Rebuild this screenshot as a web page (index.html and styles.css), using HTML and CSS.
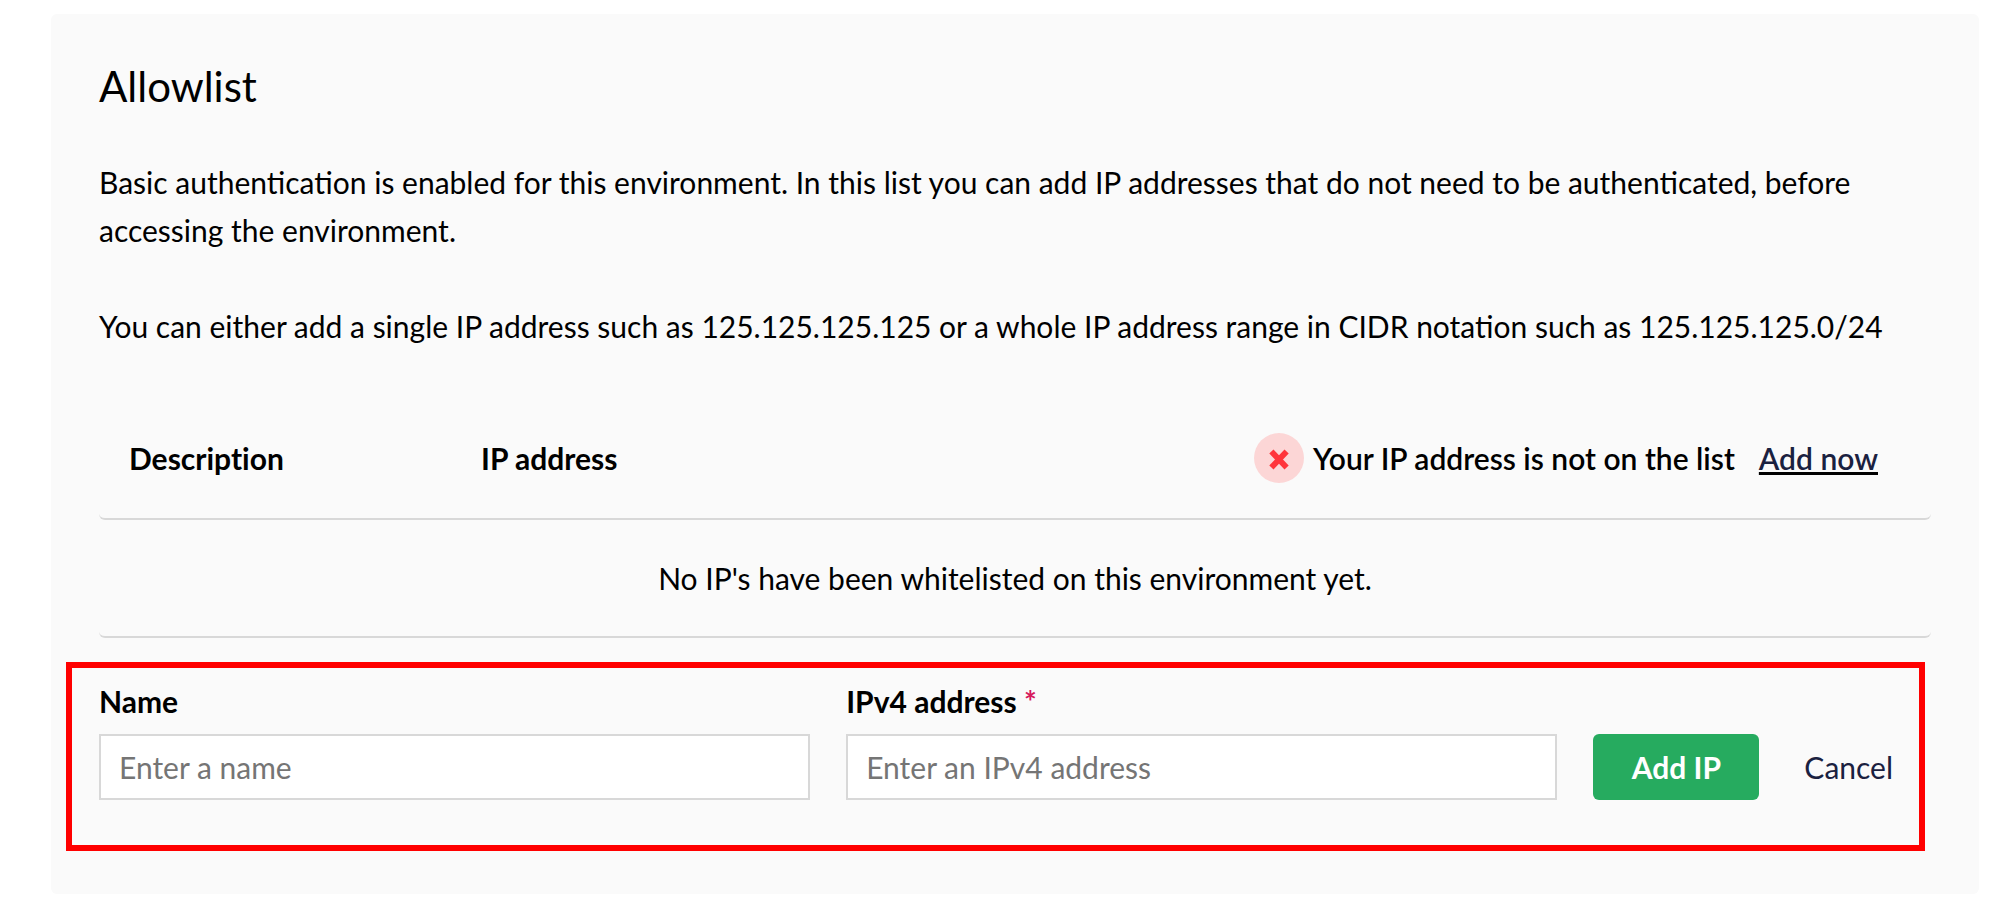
FILE: index.html
```html
<!DOCTYPE html>
<html lang="en">
<head>
<meta charset="utf-8">
<title>Allowlist</title>
<link rel="stylesheet" href="styles.css">
</head>
<body>
<main class="card">
  <h1 class="title">Allowlist</h1>
  <p class="text">Basic authentication is enabled for this environment. In this list you can add IP addresses that do not need to be authenticated, before accessing the environment.</p>
  <p class="text">You can either add a single IP address such as 125.125.125.125 or a whole IP address range in CIDR notation such as 125.125.125.0/24</p>
  <table class="list">
    <thead>
      <tr>
        <th class="col-desc">Description</th>
        <th class="col-ip">IP address</th>
        <th class="col-status">
          <div class="status">
            <svg class="status-icon" viewBox="0 0 50 50" aria-hidden="true"><circle cx="25" cy="25" r="25" fill="#fcd6d6"/><path d="M17.4 18.4L32.6 34.4M32.6 18.4L17.4 34.4" stroke="#ff353b" stroke-width="5.8"/></svg>
            <span>Your IP address is not on the list</span>
            <a class="add-now" href="#">Add now</a>
          </div>
        </th>
      </tr>
    </thead>
    <tbody>
      <tr><td class="empty" colspan="3">No IP's have been whitelisted on this environment yet.</td></tr>
    </tbody>
  </table>
  <form class="form">
    <div class="field">
      <label class="label" for="name">Name</label>
      <input class="input" id="name" type="text" placeholder="Enter a name">
    </div>
    <div class="field">
      <label class="label" for="ip">IPv4 address <span class="required">*</span></label>
      <input class="input" id="ip" type="text" placeholder="Enter an IPv4 address">
    </div>
    <button class="submit" type="submit">Add IP</button>
    <button class="cancel" type="button">Cancel</button>
  </form>
</main>
</body>
</html>
```
FILE: styles.css
```css
* { box-sizing: border-box; }
body {
  margin: 0;
  padding: 14px 37px 16px 51px;
  background: #fff;
  color: #000;
  font: 30px/48px Lato, sans-serif;
}
.card {
  padding: 48px 48px 43px;
  border-radius: 6px;
  background: #fafafa;
}
.title { margin: 0 0 48px; font-size: 42px; line-height: 48px; font-weight: 400; }
.text { margin: 0 0 48px; }
.list { width: 100%; border-collapse: separate; border-spacing: 0; table-layout: fixed; }
.list th, .list td { padding: 0 30px; border-bottom: 2px solid #d8d8d8; text-align: left; }
.list th { height: 122px; font-weight: 700; font-variant-ligatures: none; }
.list td { height: 118px; }
.list th:first-child { border-bottom-left-radius: 6px; }
.list th:last-child { border-bottom-right-radius: 6px; }
.list .empty { border-radius: 0 0 6px 6px; text-align: center; }
.col-desc { width: 352px; }
.col-ip { width: 352px; }
.list .col-status { padding-right: 53px; }
.status {
  display: flex;
  align-items: center;
  justify-content: flex-end;
  font-weight: 600;
  white-space: nowrap;
}
.status-icon { width: 50px; height: 50px; margin-right: 9px; }
.add-now {
  margin-left: 24px;
  color: #1a2140;
  text-decoration: underline 3px #000;
  text-underline-offset: 2px;
}
.form {
  display: flex;
  align-items: flex-end;
  gap: 36px;
  margin: 24px 6px 0 -33px;
  padding: 9px 26px 45px 27px;
  border: 6px solid #ff0000;
}
.field { flex: 1; }
.label { display: block; margin-bottom: 9px; font-weight: 700; }
.required { color: #d6195c; }
.input {
  display: block;
  width: 100%;
  height: 66px;
  padding: 0 18px;
  border: 2px solid #d8d8d8;
  background: #fff;
  font: inherit;
}
.input::placeholder { color: #757575; }
.submit, .cancel { height: 66px; border: 0; font: inherit; }
.submit { width: 166px; border-radius: 6px; background: #26ab5f; color: #fff; font-weight: 700; }
.cancel { padding: 0; margin-left: 9px; background: none; color: #1a2140; }
```
